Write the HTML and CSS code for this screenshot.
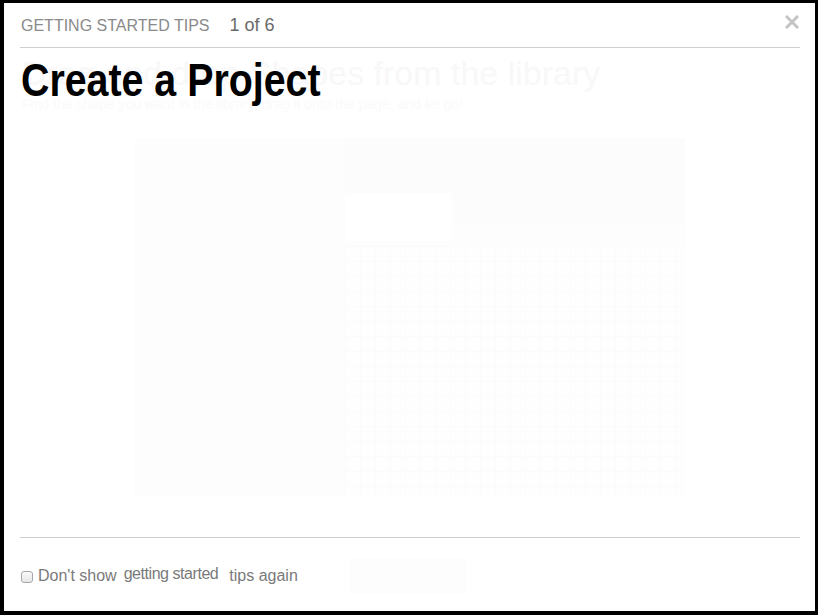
FILE: index.html
```html
<!DOCTYPE html>
<html lang="en">
<head>
<meta charset="utf-8">
<title>Getting Started Tips</title>
<link rel="stylesheet" href="styles.css">
</head>
<body>
<div class="dialog">
  <header class="tips-header">
    <span class="tips-label">GETTING STARTED TIPS</span>
    <span class="tips-count">1 of 6</span>
    <button class="close" type="button" aria-label="Close">
      <svg width="14" height="14" viewBox="0 0 14 14"><path d="M2 2 L12 12 M12 2 L2 12" stroke="#c4c4c4" stroke-width="3" stroke-linecap="square" fill="none"/></svg>
    </button>
  </header>
  <section class="tip-body">
    <div class="ghost">
      <h2 class="ghost-title">Drag and drop Shapes from the library</h2>
      <p class="ghost-sub">Find the shape you want in the library, drag it onto the page, and let go!</p>
      <div class="ghost-shot">
        <div class="shot-side"></div>
        <div class="shot-main">
          <div class="shot-bar"></div>
          <div class="shot-tabrow"><div class="shot-tab"></div></div>
          <div class="shot-grid"></div>
        </div>
      </div>
    </div>
    <h1 class="tip-title">Create a Project</h1>
  </section>
  <footer class="tips-footer">
    <label class="dont-show">
      <input type="checkbox" class="check">
      <span class="lbl">Don't show</span>
      <span class="lbl lbl-raised">getting started</span>
      <span class="lbl lbl-last">tips again</span>
    </label>
    <div class="ghost-btn"></div>
  </footer>
</div>
</body>
</html>
```

FILE: styles.css
```css
html, body {
  margin: 0;
  padding: 0;
  background: #000;
}

body {
  padding: 3px 3px 4px 4px;
  font-family: "Liberation Sans", Arial, sans-serif;
}

.dialog {
  position: relative;
  width: 811px;
  height: 608px;
  background: #fff;
  padding: 0 15px 0 16px;
  box-sizing: border-box;
  display: flex;
  flex-direction: column;
}

.tips-header {
  display: flex;
  align-items: baseline;
  padding: 12px 0 11px 1px;
  line-height: 20px;
  border-bottom: 1px solid #cfcfcf;
}

.tips-label {
  font-size: 16px;
  color: #8a8a8a;
}

.tips-count {
  font-size: 18px;
  color: #6a6a6a;
  margin-left: 20px;
}

.close {
  position: absolute;
  top: 12px;
  right: 16px;
  width: 14px;
  height: 14px;
  padding: 0;
  border: 0;
  background: none;
  display: flex;
}

.tip-body {
  position: relative;
  height: 490px;
  border-bottom: 1px solid #cfcfcf;
  box-sizing: border-box;
  overflow: hidden;
}

.ghost {
  padding: 7px 0 0 2px;
}

.ghost-title {
  margin: 0;
  font-size: 34px;
  font-weight: normal;
  line-height: 36px;
  color: #f8f8f8;
  white-space: nowrap;
}

.ghost-sub {
  margin: 4px 0 0;
  font-size: 14px;
  line-height: 18px;
  color: #fafafa;
}

.ghost-shot {
  margin: 25px 0 0 113px;
  width: 550px;
  height: 358px;
  display: flex;
  background: #fdfdfd;
  border-radius: 4px;
}

.shot-side {
  width: 210px;
  background: #fdfdfd;
}

.shot-main {
  flex: 1;
  display: flex;
  flex-direction: column;
}

.shot-bar {
  height: 55px;
  background: #fcfcfc;
}

.shot-tabrow {
  height: 30px;
  background: #fcfcfc;
}

.shot-tab {
  width: 107px;
  height: 48px;
  background: #fff;
}

.shot-grid {
  flex: 1;
  margin-top: 23px;
  background-color: #fefefe;
  background-image:
    linear-gradient(to right, #fbfbfb 1px, transparent 1px),
    linear-gradient(to bottom, #fbfbfb 1px, transparent 1px);
  background-size: 15px 15px;
}

.tip-title {
  position: absolute;
  top: 9px;
  left: 1px;
  margin: 0;
  font-size: 46px;
  line-height: 46px;
  font-weight: bold;
  color: #000;
  white-space: nowrap;
  transform: scaleX(0.855);
  transform-origin: left center;
}

.tips-footer {
  display: flex;
  align-items: center;
  padding-top: 20px;
}

.dont-show {
  display: flex;
  align-items: center;
  font-size: 16px;
  line-height: 20px;
  color: #7a7a7a;
}

.check {
  appearance: none;
  -webkit-appearance: none;
  width: 12px;
  height: 12px;
  margin: 1px 5px 0 1px;
  border: 1px solid #a8a8a8;
  border-radius: 3px;
  background: linear-gradient(#fafafa, #e6e6e6);
  box-sizing: border-box;
}

.lbl-raised {
  margin-left: 7px;
  letter-spacing: -0.45px;
  position: relative;
  top: -2px;
}

.lbl-last {
  margin-left: 11px;
}

.ghost-btn {
  width: 118px;
  height: 36px;
  margin-left: 51px;
  background: #fdfdfd;
  border-radius: 3px;
}
```
